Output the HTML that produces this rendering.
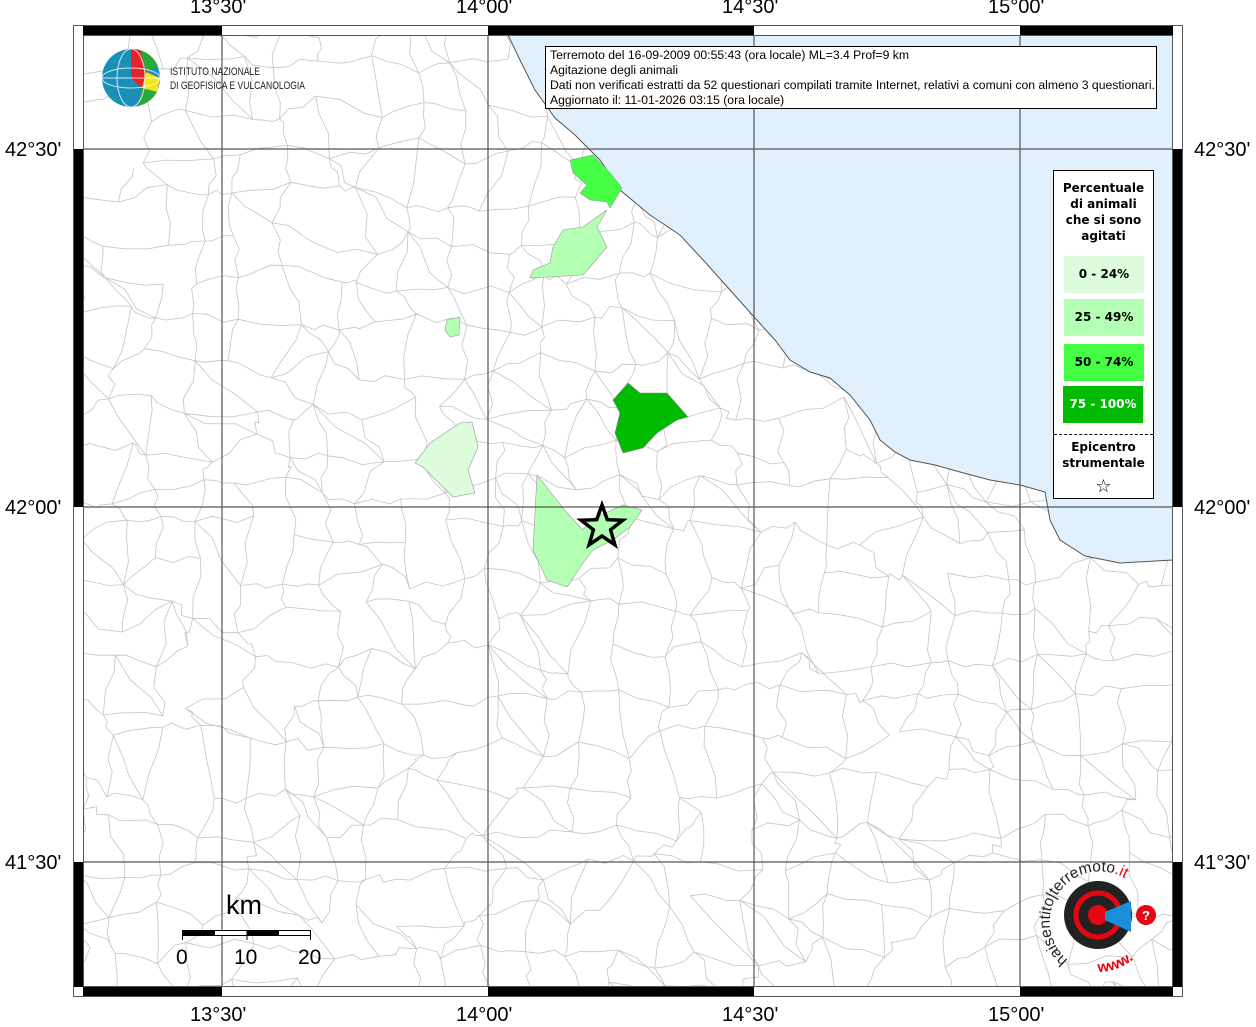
<!DOCTYPE html>
<html><head><meta charset="utf-8"><style>
html,body{margin:0;padding:0;background:#fff;width:1256px;height:1024px;overflow:hidden;font-family:"Liberation Sans",sans-serif}
.lab{position:absolute;font-size:20px;color:#000;white-space:nowrap}
#info{position:absolute;left:545px;top:46px;width:612px;height:63px;border:1px solid #000;background:#fff;font-size:12.2px;line-height:15px;padding:1px 0 0 4px;box-sizing:border-box;white-space:nowrap}
#leg{position:absolute;left:1053px;top:170px;width:101px;height:329px;border:1px solid #000;background:#fff;box-sizing:border-box;font-family:"DejaVu Sans",sans-serif;font-weight:bold;font-size:12px;text-align:center}
.bx{position:absolute;left:10px;width:80px;height:37px;line-height:37px;font-size:12px}
</style></head><body>
<svg id="map" width="1256" height="1024" style="position:absolute;left:0;top:0">
<defs><clipPath id="cp"><rect x="83" y="35" width="1090" height="952"/></clipPath></defs>
<g id="lines" clip-path="url(#cp)" fill="none" stroke="#c4c4c4" stroke-width="0.8"></g>
<g clip-path="url(#cp)">
<path d="M508,35 L520,60 L535,90 L555,118 L575,135 L600,160 L620,190 L650,215 L680,235 L705,262 L730,290 L755,318 L775,340 L790,360 L810,372 L830,378 L850,395 L870,420 L880,440 L895,452 L910,460 L935,465 L960,472 L990,480 L1020,485 L1045,492 L1050,520 L1060,540 L1085,556 L1120,563 L1173,560 L1173,35 Z" fill="#e0f0fc" stroke="#555" stroke-width="1"/>
<polygon points="570,160 593,155 610,173 622,188 610,208 607,202 590,200 580,193 587,185 573,173" fill="#44ff44" stroke="#999" stroke-width=".6"/>
<polygon points="607,210 597,227 607,247 590,267 583,275 530,278 533,270 550,263 553,247 563,230 583,227 597,217" fill="#b3ffb3" stroke="#999" stroke-width=".6"/>
<polygon points="447,320 460,317 459,335 450,337 445,330" fill="#b3ffb3" stroke="#999" stroke-width=".6"/>
<polygon points="613,400 628,383 640,393 667,393 688,417 677,420 657,433 643,448 623,453 615,433 620,413" fill="#00bb00" stroke="#888" stroke-width=".6"/>
<polygon points="430,443 460,423 472,422 478,447 468,470 475,493 453,497 423,467 415,463" fill="#dcfcdc" stroke="#999" stroke-width=".6"/>
<polygon points="537,475 567,513 583,530 590,520 623,505 642,510 630,527 613,540 593,550 583,563 567,587 547,580 533,550" fill="#b3ffb3" stroke="#999" stroke-width=".6"/>
<g stroke="#555" stroke-width="1.2">
<line x1="222" y1="35" x2="222" y2="987"/><line x1="488" y1="35" x2="488" y2="987"/><line x1="754" y1="35" x2="754" y2="987"/><line x1="1020" y1="35" x2="1020" y2="987"/>
<line x1="83" y1="149" x2="1173" y2="149"/><line x1="83" y1="507" x2="1173" y2="507"/><line x1="83" y1="862" x2="1173" y2="862"/>
</g>
</g>
<polygon id="star" fill="none" stroke="#000" stroke-width="3.5"/>
<rect x="73.5" y="25.5" width="1109" height="971" fill="none" stroke="#555" stroke-width="1"/>
<g fill="#000">
<rect x="83" y="26" width="139" height="9"/><rect x="488" y="26" width="266" height="9"/><rect x="1020" y="26" width="153" height="9"/>
<rect x="83" y="987" width="139" height="9"/><rect x="488" y="987" width="266" height="9"/><rect x="1020" y="987" width="153" height="9"/>
<rect x="74" y="149" width="9" height="358"/><rect x="74" y="862" width="9" height="125"/>
<rect x="1173" y="149" width="9" height="358"/><rect x="1173" y="862" width="9" height="125"/>
</g>
<rect x="83.5" y="35.5" width="1089" height="951" fill="none" stroke="#555" stroke-width="1"/>
<rect x="182.5" y="930.5" width="128" height="5" fill="#fff" stroke="#000"/>
<rect x="182" y="930" width="33" height="6" fill="#000"/><rect x="247" y="930" width="32" height="6" fill="#000"/>
<line x1="182.5" y1="930" x2="182.5" y2="940" stroke="#000"/><line x1="247" y1="930" x2="247" y2="940" stroke="#000"/><line x1="310.5" y1="930" x2="310.5" y2="940" stroke="#000"/>
<text x="226" y="914" font-size="27" font-family="Liberation Sans">km</text>
<text x="176" y="964" font-size="21" font-family="Liberation Sans">0</text>
<text x="234" y="964" font-size="21" font-family="Liberation Sans">10</text>
<text x="298" y="964" font-size="21" font-family="Liberation Sans">20</text>
<g>
<circle cx="131" cy="78" r="29" fill="#1a8fb8"/>
<path d="M140,50 A29,29 0 0 1 158,66 L146,72 Z" fill="#2ba83a"/>
<path d="M131,49 A29,29 0 0 1 140,50 L146,72 L131,78 Z" fill="#e8222a"/>
<path d="M146,72 L160,78 L157,92 L142,88 Z" fill="#f4e21a"/>
<path d="M142,88 L157,92 A29,29 0 0 1 138,106 Z" fill="#2ba83a"/>
<path d="M131,78 L146,72 L142,88 Z" fill="#e8222a"/>
<g fill="none" stroke="#fff" stroke-width="1" opacity=".8"><ellipse cx="131" cy="78" rx="14" ry="29"/><ellipse cx="131" cy="78" rx="29" ry="10"/><line x1="102" y1="78" x2="160" y2="78"/></g>
<text x="170" y="75" font-size="11" font-family="Liberation Sans" textLength="90" lengthAdjust="spacingAndGlyphs" fill="#222">ISTITUTO NAZIONALE</text>
<text x="170" y="89" font-size="11" font-family="Liberation Sans" textLength="135" lengthAdjust="spacingAndGlyphs" fill="#222">DI GEOFISICA E VULCANOLOGIA</text>
</g>
<g>
<circle cx="1098" cy="915" r="34" fill="#222"/>
<circle cx="1098" cy="915" r="22" fill="none" stroke="#e30613" stroke-width="5"/>
<circle cx="1098" cy="915" r="10" fill="#e30613"/>
<polygon points="1105,912 1131,901 1131,932 1105,920" fill="#1a8fd8"/>
<circle cx="1146" cy="915" r="10" fill="#e30613"/>
<text x="1142" y="920" font-size="13" font-weight="bold" fill="#fff" font-family="Liberation Sans">?</text>
<path id="arc1" d="M1068,960 A50,50 0 1 1 1147,905" fill="none"/>
<text font-size="15.5" font-family="Liberation Sans" fill="#222"><textPath href="#arc1">haisentito|terremoto<tspan fill="#e30613">.it</tspan></textPath></text>
<path id="arc2" d="M1098,972 A57,57 0 0 0 1146,945" fill="none"/>
<text font-size="15" font-weight="bold" fill="#e30613" font-family="Liberation Sans"><textPath href="#arc2">www.</textPath></text>
</g>
</svg>
<div class="lab" style="left:190px;top:-4px">13°30'</div>
<div class="lab" style="left:456px;top:-4px">14°00'</div>
<div class="lab" style="left:722px;top:-4px">14°30'</div>
<div class="lab" style="left:988px;top:-4px">15°00'</div>
<div class="lab" style="left:190px;top:1004px">13°30'</div>
<div class="lab" style="left:456px;top:1004px">14°00'</div>
<div class="lab" style="left:722px;top:1004px">14°30'</div>
<div class="lab" style="left:988px;top:1004px">15°00'</div>
<div class="lab" style="left:5px;top:139px">42°30'</div>
<div class="lab" style="left:5px;top:497px">42°00'</div>
<div class="lab" style="left:5px;top:852px">41°30'</div>
<div class="lab" style="left:1194px;top:139px">42°30'</div>
<div class="lab" style="left:1194px;top:497px">42°00'</div>
<div class="lab" style="left:1194px;top:852px">41°30'</div>
<div id="info">Terremoto del 16-09-2009 00:55:43 (ora locale) ML=3.4 Prof=9 km<br>Agitazione degli animali<br>Dati non verificati estratti da 52 questionari compilati tramite Internet, relativi a comuni con almeno 3 questionari.<br>Aggiornato il: 11-01-2026 03:15 (ora locale)</div>
<div id="leg">
<div style="position:absolute;left:0;top:9px;width:100%;line-height:16px">Percentuale<br>di animali<br>che si sono<br>agitati</div>
<div class="bx" style="top:85px;background:#dcfcdc">0 - 24%</div>
<div class="bx" style="top:128px;background:#b3ffb3">25 - 49%</div>
<div class="bx" style="top:173px;background:#44ff44">50 - 74%</div>
<div class="bx" style="left:9px;width:80px;top:215px;background:#00bb00;color:#fff">75 - 100%</div>
<div style="position:absolute;left:0;top:263px;width:100%;border-top:1px dashed #000"></div>
<div style="position:absolute;left:0;top:268px;width:100%;line-height:16px">Epicentro<br>strumentale</div>
<div style="position:absolute;left:0;top:305px;width:100%;font-size:18px;font-weight:normal">☆</div>
</div>
<script>
(function(){
var s=12345;function r(){s=(s*16807)%2147483647;return s/2147483647;}
var g=document.getElementById('lines'),ns='http://www.w3.org/2000/svg';
var sp=42,cols=Math.ceil(1100/sp)+2,rows=Math.ceil(960/sp)+2,P=[];
for(var j=0;j<rows;j++){P[j]=[];for(var i=0;i<cols;i++){P[j][i]=[75+i*sp+(r()-.5)*sp*.8,28+j*sp+(r()-.5)*sp*.8];}}
var d='';
function seg(a,b){var m1=[a[0]+(b[0]-a[0])/3+(r()-.5)*10,a[1]+(b[1]-a[1])/3+(r()-.5)*10],m2=[a[0]+2*(b[0]-a[0])/3+(r()-.5)*10,a[1]+2*(b[1]-a[1])/3+(r()-.5)*10];
d+='M'+a[0].toFixed(1)+','+a[1].toFixed(1)+'L'+m1[0].toFixed(1)+','+m1[1].toFixed(1)+'L'+m2[0].toFixed(1)+','+m2[1].toFixed(1)+'L'+b[0].toFixed(1)+','+b[1].toFixed(1);}
for(var j=0;j<rows;j++)for(var i=0;i<cols;i++){
if(i+1<cols&&r()>.15)seg(P[j][i],P[j][i+1]);
if(j+1<rows&&r()>.15)seg(P[j][i],P[j+1][i]);
if(i+1<cols&&j+1<rows&&r()>.75)seg(P[j][i],P[j+1][i+1]);}
var p=document.createElementNS(ns,'path');p.setAttribute('d',d);g.appendChild(p);
var st=document.getElementById('star'),cx=602,cy=527,pts=[];
for(var k=0;k<10;k++){var ang=-Math.PI/2+k*Math.PI/5,rr=k%2?9:22;pts.push((cx+rr*Math.cos(ang)).toFixed(1)+','+(cy+rr*Math.sin(ang)).toFixed(1));}
st.setAttribute('points',pts.join(' '));
})();
</script>
</body></html>
